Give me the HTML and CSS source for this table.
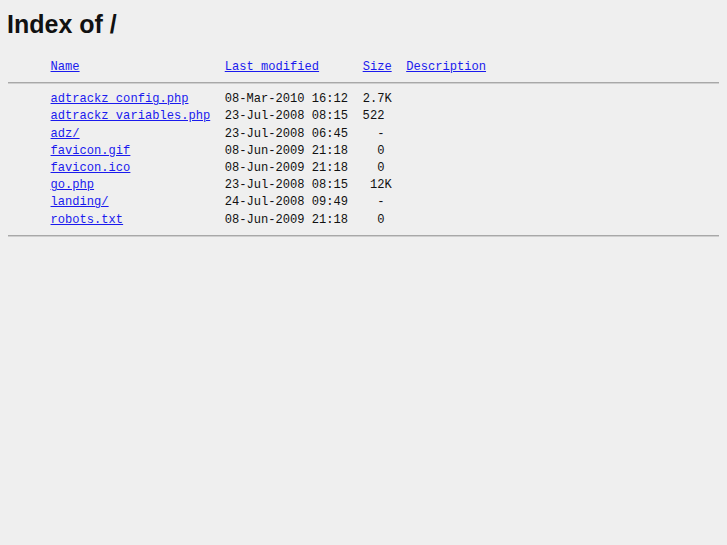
FILE: index.html
```html
<!DOCTYPE html>
<html lang="en">
<head>
    <meta charset="UTF-8">
    <title>Index of /</title>
    <link rel="stylesheet" href="styles.css">
</head>
<body>
    <h1>Index of /</h1>
    <pre class="listing">      <a href="?C=N;O=D">Name</a>                    <a href="?C=M;O=A">Last modified</a>      <a href="?C=S;O=A">Size</a>  <a href="?C=D;O=A">Description</a></pre>
    <hr>
    <pre class="listing rows">      <a href="adtrackz_config.php">adtrackz_config.php</a>     08-Mar-2010 16:12  2.7K
      <a href="adtrackz_variables.php">adtrackz_variables.php</a>  23-Jul-2008 08:15  522
      <a href="adz/">adz/</a>                    23-Jul-2008 06:45    -
      <a href="favicon.gif">favicon.gif</a>             08-Jun-2009 21:18    0
      <a href="favicon.ico">favicon.ico</a>             08-Jun-2009 21:18    0
      <a href="go.php">go.php</a>                  23-Jul-2008 08:15   12K
      <a href="landing/">landing/</a>                24-Jul-2008 09:49    -
      <a href="robots.txt">robots.txt</a>              08-Jun-2009 21:18    0</pre>
    <hr>
</body>
</html>
```

FILE: styles.css
```css
body {
    margin: 8px;
    background-color: #efefef;
    color: #111;
}

h1 {
    font-family: "Liberation Sans", Arial, sans-serif;
    font-size: 25px;
    font-weight: bold;
    margin: 2px 0 20px -1px;
}

.listing {
    font-family: "Liberation Mono", "Courier New", monospace;
    font-size: 12.1px;
    line-height: 17.2px;
    margin: 0 0 0 -1px;
}

.listing a {
    color: #1a1aee;
}

.rows {
    margin-top: 7px;
}

hr {
    height: 0;
    border: 0;
    border-top: 1px solid #a8a8a8;
    border-bottom: 1px solid #cfcfcf;
    margin: 6px -1px 0;
}
```
